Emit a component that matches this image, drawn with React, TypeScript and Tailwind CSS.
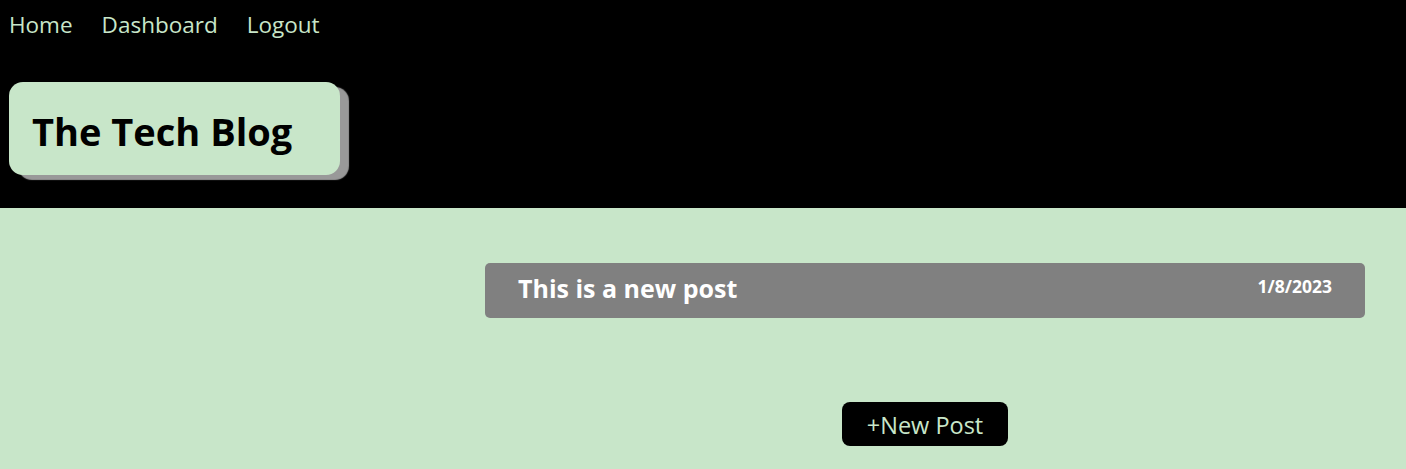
export default function App() {
  return (
    <div className="min-h-[469px] bg-[#c8e6c9] font-['Open_Sans',sans-serif]">
      <header className="bg-black h-[208px] px-[9px] pt-[8px]">
        <nav className="flex gap-[29px] text-[22.5px] text-[#c8e6c9] leading-[34px]">
          <a href="#">Home</a>
          <a href="#">Dashboard</a>
          <a href="#">Logout</a>
        </nav>
        <div className="mt-[40px] w-[331px] h-[93px] rounded-[14px] bg-[#c8e6c9] shadow-[9px_5px_1px_#999] flex items-center pl-[23px] pt-[4px]">
          <h1 className="text-[38px] font-bold text-black leading-none">The Tech Blog</h1>
        </div>
      </header>
      <main className="flex justify-end pr-[41px] pt-[55px]">
        <div className="w-[880px] flex flex-col items-center">
          <div className="w-full h-[55px] bg-[#808080] rounded-[5px] flex items-center justify-between pl-[33px] pr-[33px]">
            <h2 className="text-[25px] font-bold text-white leading-none -mt-[5px]">This is a new post</h2>
            <span className="text-[17.5px] font-bold text-white -mt-[8px]">1/8/2023</span>
          </div>
          <button className="mt-[84px] h-[44px] px-[25px] pt-[3px] bg-black text-[#c8e6c9] text-[23.5px] rounded-[8px]">+New Post</button>
        </div>
      </main>
    </div>
  );
}
